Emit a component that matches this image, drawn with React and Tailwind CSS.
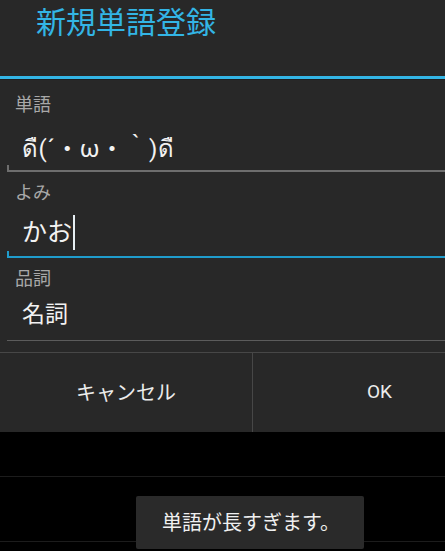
import React from 'react';

const font = { fontFamily: '"Roboto", "Noto Sans CJK JP", "DejaVu Sans", sans-serif' };

const Field = ({ label, value, focused, cursor, labelTop, valueTop, valueSize, lineTop }) => (
  <div className="pl-[7px]">
    <div className={`${labelTop} pl-[8px] text-[18px] leading-[20px] text-[#a8a8a8]`}>{label}</div>
    <div className={`${valueTop} ${valueSize} flex items-center pl-[15px] text-[#f2f2f2]`}>
      <span>{value}</span>
      {cursor && <span className="ml-[1px] h-[35px] w-[2px] bg-[#e6eef2]" />}
    </div>
    <div
      className={
        focused
          ? `${lineTop} h-[7px] border-b-2 border-l-2 border-[#1f9ccc]`
          : `${lineTop} h-[7px] border-b-2 border-l-2 border-[#6e6e6e]`
      }
    />
  </div>
);

export default function App() {
  return (
    <div className="relative h-[551px] w-[445px] overflow-hidden bg-black" style={font}>
      <div className="bg-[#282828]">
        <div className="flex h-[76px] items-start pl-[36px] pt-[5px] text-[30px] leading-[36px] text-[#33b5e5]">
          新規単語登録
        </div>
        <div className="h-[3px] bg-[#33b5e5]" />
        <div className="h-[1px] bg-[#1e1e1e]" />

        <Field
          label="単語"
          value="ดื(´・ω・｀)ดื"
          labelTop="mt-[15px]"
          valueTop="mt-[20px]"
          valueSize="text-[24px] leading-[28px] tracking-[0.5px]"
          lineTop="mt-[2px]"
        />
        <Field
          label="よみ"
          value="かお"
          focused
          cursor
          labelTop="mt-[11px]"
          valueTop="mt-[12px]"
          valueSize="text-[25px] leading-[30px]"
          lineTop="mt-[1px]"
        />

        <div className="pl-[7px]">
          <div className="mt-[11px] pl-[8px] text-[18px] leading-[20px] text-[#a8a8a8]">品詞</div>
          <div className="mt-[12px] pl-[15px] text-[23px] leading-[28px] text-[#f2f2f2]">名詞</div>
          <div className="mt-[11px] h-[1px] bg-[#5c5c5c]" />
        </div>

        <div className="mt-[11px] flex h-[80px] border-t border-[#474747]">
          <div className="flex w-[253px] shrink-0 items-center justify-center border-r border-[#474747] text-[20px] text-[#ececec]">
            キャンセル
          </div>
          <div className="flex w-[253px] shrink-0 items-center justify-center text-[19px] text-[#ececec]">OK</div>
        </div>
      </div>

      <div className="mt-[44px] h-[1px] bg-[#1c1c1c]" />
      <div className="mt-[64px] h-[1px] bg-[#1c1c1c]" />

      <div className="absolute left-[136px] top-[496px] flex h-[53px] w-[228px] items-center rounded-[2px] bg-[#2a2a2a] pl-[26px] text-[20px] text-[#f0f0f0]">
        単語が長すぎます。
      </div>
    </div>
  );
}
